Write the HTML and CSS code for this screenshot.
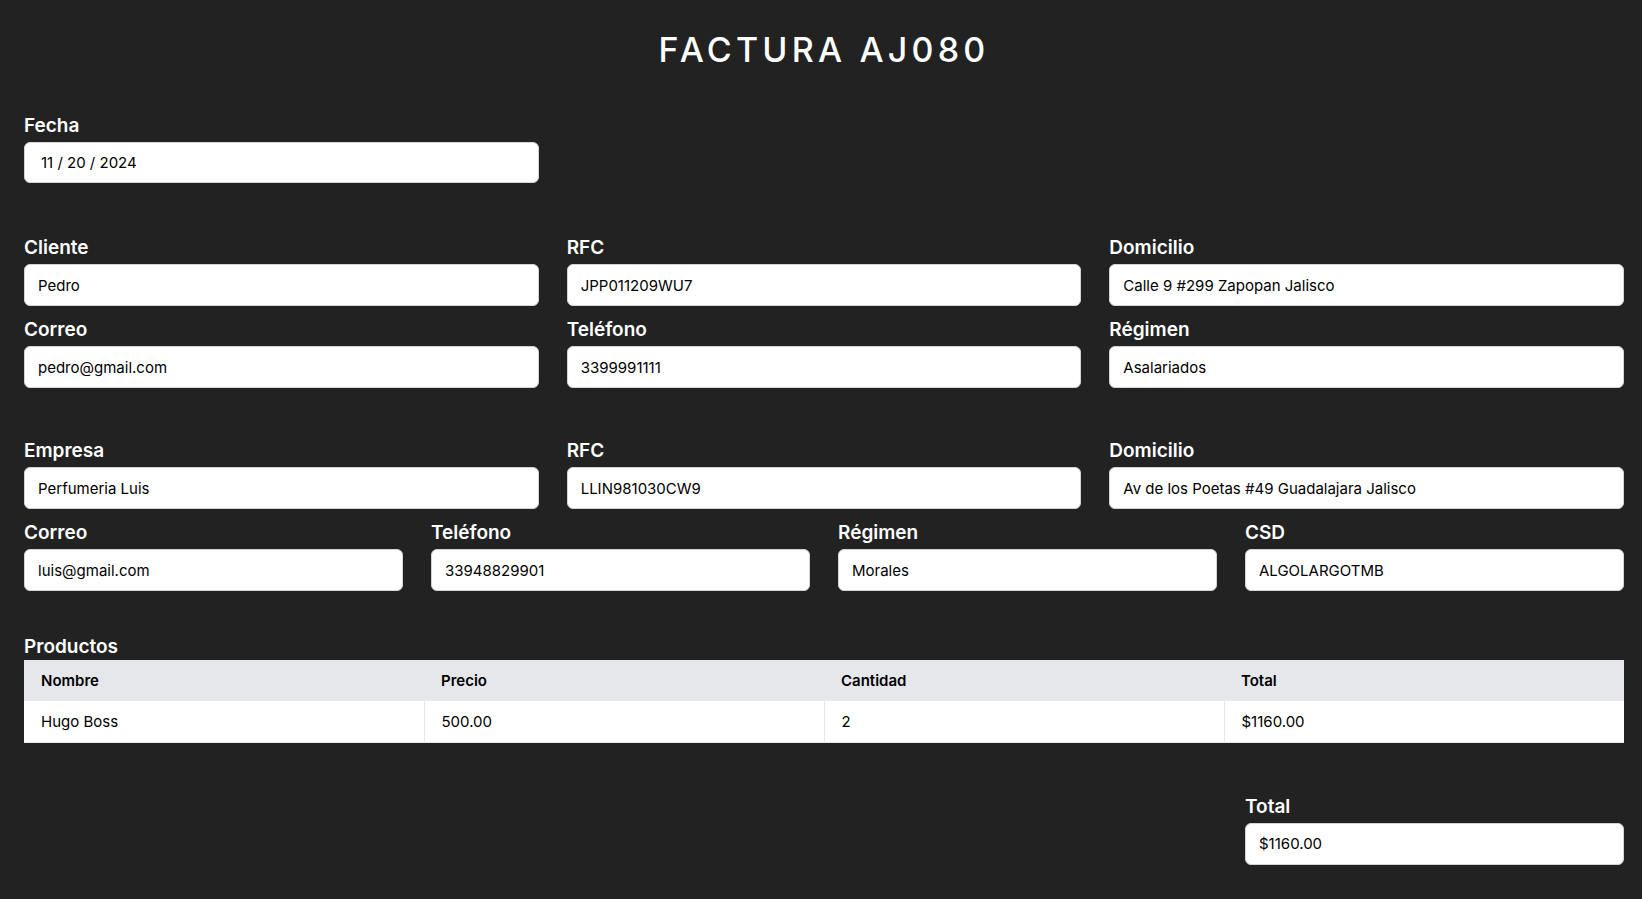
FILE: index.html
```html
<!DOCTYPE html>
<html lang="es">
<head>
<meta charset="utf-8">
<title>Factura AJ080</title>
<link rel="stylesheet" href="styles.css">
</head>
<body>
<main class="page">
  <h1 class="title">FACTURA AJ080</h1>

  <section class="section section-date grid-3">
    <div class="field">
      <label class="label">Fecha</label>
      <input class="input input-date" type="text" value="11 / 20 / 2024">
    </div>
  </section>

  <section class="section section-client grid-3">
    <div class="field">
      <label class="label">Cliente</label>
      <input class="input" type="text" value="Pedro">
    </div>
    <div class="field">
      <label class="label">RFC</label>
      <input class="input" type="text" value="JPP011209WU7">
    </div>
    <div class="field">
      <label class="label">Domicilio</label>
      <input class="input" type="text" value="Calle 9 #299 Zapopan Jalisco">
    </div>
    <div class="field">
      <label class="label">Correo</label>
      <input class="input" type="text" value="pedro@gmail.com">
    </div>
    <div class="field">
      <label class="label">Teléfono</label>
      <input class="input" type="text" value="3399991111">
    </div>
    <div class="field">
      <label class="label">Régimen</label>
      <input class="input" type="text" value="Asalariados">
    </div>
  </section>

  <section class="section section-company">
    <div class="grid-3">
      <div class="field">
        <label class="label">Empresa</label>
        <input class="input" type="text" value="Perfumeria Luis">
      </div>
      <div class="field">
        <label class="label">RFC</label>
        <input class="input" type="text" value="LLIN981030CW9">
      </div>
      <div class="field">
        <label class="label">Domicilio</label>
        <input class="input" type="text" value="Av de los Poetas #49 Guadalajara Jalisco">
      </div>
    </div>
    <div class="grid-4 row-gap">
      <div class="field">
        <label class="label">Correo</label>
        <input class="input" type="text" value="luis@gmail.com">
      </div>
      <div class="field">
        <label class="label">Teléfono</label>
        <input class="input" type="text" value="33948829901">
      </div>
      <div class="field">
        <label class="label">Régimen</label>
        <input class="input" type="text" value="Morales">
      </div>
      <div class="field">
        <label class="label">CSD</label>
        <input class="input" type="text" value="ALGOLARGOTMB">
      </div>
    </div>
  </section>

  <section class="section section-products">
    <div class="label label-products">Productos</div>
    <table class="table">
      <thead>
        <tr><th>Nombre</th><th>Precio</th><th>Cantidad</th><th>Total</th></tr>
      </thead>
      <tbody>
        <tr><td>Hugo Boss</td><td>500.00</td><td>2</td><td>$1160.00</td></tr>
      </tbody>
    </table>
  </section>

  <section class="section section-total grid-4">
    <div class="field field-total">
      <label class="label">Total</label>
      <input class="input" type="text" value="$1160.00">
    </div>
  </section>
</main>
</body>
</html>
```
FILE: styles.css
```css
* { box-sizing: border-box; }
html, body {
  margin: 0;
  background: #222222;
}
body {
  font-family: "Inter", "Liberation Sans", sans-serif;
  color: #ffffff;
}
.page {
  padding: 30px 18px 40px 24px;
}
.title {
  margin: 0;
  text-align: center;
  font-size: 34px;
  line-height: 40px;
  font-weight: 500;
  letter-spacing: 4.2px;
  color: #ffffff;
}
.section-date {
  margin-top: 40px;
}
.section-client {
  margin-top: 49px;
}
.section-company {
  margin-top: 47px;
}
.section-products {
  margin-top: 43px;
}
.section-total {
  margin-top: 48px;
}
.grid-3 {
  display: grid;
  grid-template-columns: repeat(3, 1fr);
  column-gap: 28px;
  row-gap: 8px;
}
.grid-4 {
  display: grid;
  grid-template-columns: repeat(4, 1fr);
  column-gap: 28px;
  row-gap: 8px;
}
.row-gap {
  margin-top: 8px;
}
.field {
  display: flex;
  flex-direction: column;
}
.field-total {
  grid-column: 4;
}
.label {
  font-size: 19px;
  line-height: 28px;
  font-weight: 600;
  color: #ffffff;
  padding-top: 2px;
  margin-bottom: 2px;
}
.label-products {
  padding-top: 0;
  margin-bottom: 0;
  line-height: 26px;
}
.input {
  height: 42px;
  width: 100%;
  border: 1px solid #d1d5db;
  border-radius: 6px;
  background: #ffffff;
  padding: 0 13px;
  font-family: inherit;
  font-size: 15px;
  color: #000000;
  outline: none;
}
.input-date {
  padding-left: 16px;
  height: 41px;
}
.table {
  width: 100%;
  border-collapse: collapse;
  table-layout: fixed;
  background: #ffffff;
  color: #000000;
  font-size: 15px;
}
.table th {
  background: #e5e7eb;
  height: 41px;
  text-align: left;
  font-weight: 600;
  padding: 0 17px;
}
.table td {
  height: 41px;
  padding: 0 17px;
  border-left: 1px solid #e5e7eb;
  border-bottom: 1px solid #e5e7eb;
}
.table td:first-child {
  border-left: none;
}
```
